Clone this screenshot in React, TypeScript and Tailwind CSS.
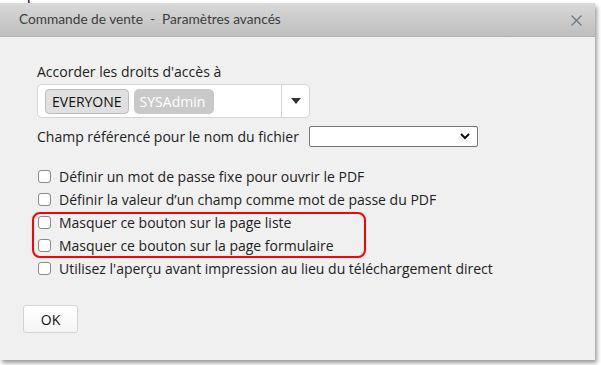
import React from "react";

function Box({ label }: { label: string }) {
  return (
    <label className="flex items-center h-[23px]">
      <span className="w-[13px] h-[13px] rounded-[3px] border border-[#8a8a8a] bg-white ml-[1px] mr-[8px] shrink-0" />
      <span>{label}</span>
    </label>
  );
}

export default function App() {
  return (
    <div
      className="w-[601px] h-[365px] bg-white overflow-hidden text-[#222] text-[14px]"
      style={{ fontFamily: '"Open Sans", "Noto Sans", sans-serif' }}
    >
      <div className="h-[3px] overflow-hidden pl-[21px]">
        <div className="-mt-[15px] leading-[18px] text-[16px] text-black whitespace-nowrap">
          que vous souhaitez modifier ou créez un nouveau
        </div>
      </div>
      <div className="w-[595px] h-[357px] bg-[#f0f0f0] shadow-[2px_3px_4px_rgba(0,0,0,0.4)] rounded-tr-[3px] flex flex-col">
        <div className="h-[34px] shrink-0 bg-gradient-to-b from-[#d9d9d9] to-[#bebebe] border-b border-[#b3b3b3] flex items-center pl-[19px] pr-[13px] justify-between">
          <span
            className="text-[#3d3d3d] text-[13.7px] whitespace-pre"
            style={{ fontFamily: 'Lato, "Open Sans", sans-serif' }}
          >
            Commande de vente  -  Paramètres avancés
          </span>
          <svg width="11" height="11" viewBox="0 0 11 11" className="mt-[2px]">
            <path d="M0.5 0.5 L10.5 10.5 M10.5 0.5 L0.5 10.5" stroke="#6d7680" strokeWidth="1.2" />
          </svg>
        </div>
        <div className="pl-[37px] pt-[25px] flex flex-col">
          <div className="leading-[20px]">Accorder les droits d'accès à</div>
          <div className="mt-[2px] w-[273px] h-[34px] bg-white border border-[#d6d6d6] rounded-[5px] flex items-center">
            <div className="flex-1 flex items-center gap-[5px] pl-[7px]">
              <span className="h-[25px] px-[6px] flex items-center bg-[#e0e0e0] border border-[#bdbdbd] rounded-[4px] text-[#111]">EVERYONE</span>
              <span className="h-[25px] w-[80px] px-[6px] flex items-center bg-[#c9c9c9] rounded-[5px] text-white">SYSAdmin</span>
            </div>
            <div className="w-[28px] h-full border-l border-[#d6d6d6] flex items-center justify-center">
              <svg width="10" height="6" viewBox="0 0 10 6">
                <path d="M0 0 L10 0 L5 6 Z" fill="#333" />
              </svg>
            </div>
          </div>
          <div className="mt-[7px] flex items-center h-[22px]">
            <span>Champ référencé pour le nom du fichier</span>
            <div className="ml-[10px] w-[169px] h-[21px] bg-white border border-[#767676] rounded-[2px] flex items-center justify-end pr-[7px]">
              <svg width="10" height="7" viewBox="0 0 10 7">
                <path d="M1 1 L5 5 L9 1" stroke="#111" strokeWidth="2" fill="none" />
              </svg>
            </div>
          </div>
          <div className="mt-[18px] flex flex-col">
            <Box label="Définir un mot de passe fixe pour ouvrir le PDF" />
            <Box label="Définir la valeur d’un champ comme mot de passe du PDF" />
            <div className="relative">
              <Box label="Masquer ce bouton sur la page liste" />
              <Box label="Masquer ce bouton sur la page formulaire" />
              <div className="absolute -left-[5px] top-[1px] w-[334px] h-[46px] border-[2.5px] border-[#ff0000] rounded-[8px] pointer-events-none" />
            </div>
            <Box label="Utilisez l'aperçu avant impression au lieu du téléchargement direct" />
          </div>
        </div>
        <div className="pl-[23px] mt-[25px]">
          <button className="w-[55px] h-[28px] bg-gradient-to-b from-white to-[#f5f5f5] border border-[#d4d4d4] rounded-[3px] text-[#111]">
            OK
          </button>
        </div>
      </div>
    </div>
  );
}
